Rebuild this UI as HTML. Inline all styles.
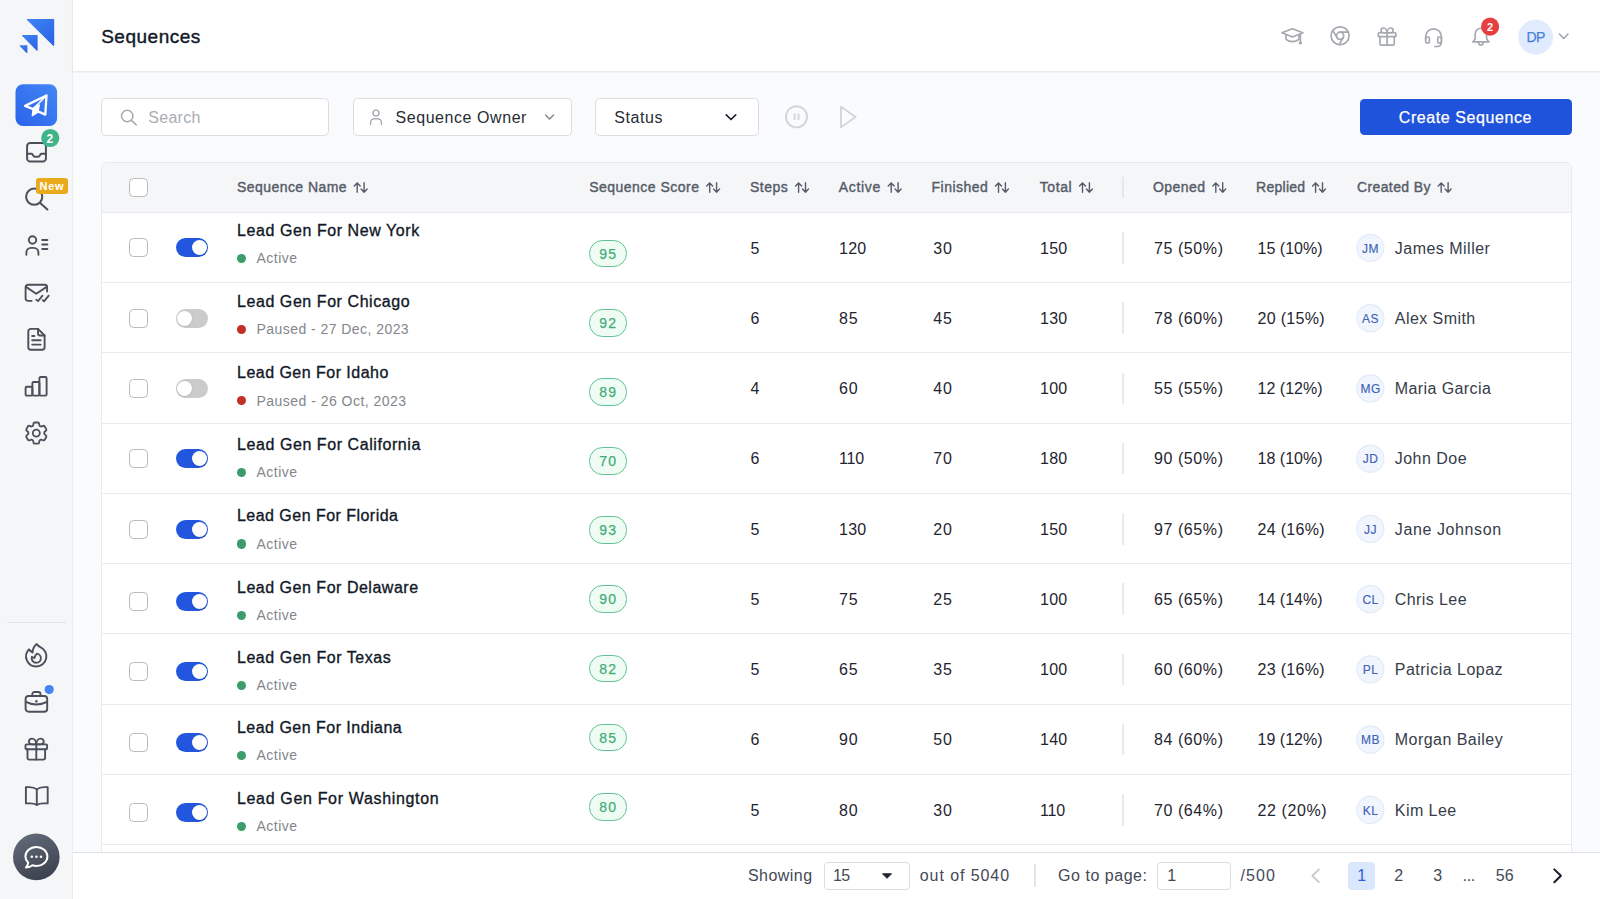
<!DOCTYPE html>
<html lang="en"><head><meta charset="utf-8"><title>Sequences</title>
<style>
*{box-sizing:border-box;margin:0;padding:0}
html,body{width:1600px;height:899px;overflow:hidden}
body{font-family:"Liberation Sans",sans-serif;background:#fafbfc;position:relative;color:#1f2937}
.t{position:absolute;height:20px;line-height:20px;white-space:pre;display:block}
.abs{position:absolute}
svg{position:absolute;overflow:visible}
#sidebar{position:absolute;left:0;top:0;width:73px;height:899px;background:#f5f6f8;border-right:1px solid #ebecef}
#header{position:absolute;left:73px;top:0;width:1527px;height:72px;background:#fff;border-bottom:1px solid #e9ebef;box-shadow:0 1px 3px rgba(16,24,40,.05)}
#main{position:absolute;left:73px;top:73px;width:1527px;height:780px;background:#fafbfc}
.box{position:absolute;background:#fff;border:1px solid #dbdde0;border-radius:4.500px}
#create{position:absolute;left:1360px;top:98.800px;width:211.500px;height:36.600px;background:#2053db;border-radius:4.500px}
#table{position:absolute;left:101px;top:162px;width:1471px;height:700px;background:#fff;border:1px solid #e8eaee;border-radius:6px 6px 0 0;overflow:hidden}
#thead{position:absolute;left:0;top:0;width:100%;height:50px;background:#f5f6f8;border-bottom:1px solid #e6e8ec}
.rowline{position:absolute;left:101px;width:1471px;height:1px;background:#eaebee}
.cb{position:absolute;width:19px;height:19px;border:1.3px solid #b9babd;border-radius:4.5px;background:#fff}
.tg{position:absolute;width:32.5px;height:19px;border-radius:10px}
.tg.on{background:#2356de}
.tg.off{background:#cbcbcc}
.tg i{position:absolute;top:2px;width:15px;height:15px;border-radius:50%;background:#fff;box-shadow:0 0.5px 1.5px rgba(0,0,0,.18)}
.tg.on i{left:15.800px}
.tg.off i{left:1.700px}
.dot{position:absolute;width:9.2px;height:9.2px;border-radius:50%}
.badge{position:absolute;width:37.600px;height:27.700px;border:1.2px solid #62c193;background:#effcf4;border-radius:13.500px}
.vdiv{position:absolute;width:1.600px;background:#e9eaed}
.av{position:absolute;width:27.6px;height:27.6px;border-radius:50%;background:#eff5fe;border:1px solid #dfe9fb}
#footer{position:absolute;left:73px;top:852px;width:1527px;height:47px;background:#fff;border-top:1px solid #dcdfe3}
</style></head>
<body>
<aside id="sidebar"><svg style="left:0px;top:0px" width="72" height="72" viewBox="0 0 72 72"><defs><linearGradient id="lg" x1="0" y1="0" x2="1" y2="1"><stop offset="0" stop-color="#3f83f4"/><stop offset="1" stop-color="#2a62e4"/></linearGradient></defs>
<g fill="url(#lg)" stroke="url(#lg)" stroke-width="1.2" stroke-linejoin="round"><path d="M27.4 19.6H53.6V45.2Z"/><path d="M22.6 35.7H37V50.2Z"/><path d="M20.3 45.9H26.8V52.4Z"/></g></svg><svg style="left:15px;top:84px" width="41.6" height="42.2" viewBox="0 0 41.6 42.2"><g transform="translate(0.500 0.200)"><defs><linearGradient id="ab" x1="1" y1="0" x2="0" y2="1"><stop offset="0" stop-color="#4387f5"/><stop offset="1" stop-color="#2a63ea"/></linearGradient></defs>
<rect x="0" y="0" width="41.6" height="41.8" rx="7.5" fill="url(#ab)"/>
<path d="M31 11.3L9.6 21.7L17.8 25L29.8 30.4Z" fill="none" stroke="#fff" stroke-width="2.3" stroke-linejoin="round"/>
<path d="M31 11.3L17.8 24.6" fill="none" stroke="#fff" stroke-width="1.6"/>
<path d="M17.6 23.6L16.6 31.9L22.6 28.2L24 20.5Z" fill="#fff" stroke="#fff" stroke-width="1" stroke-linejoin="round"/></g></svg><svg style="left:26px;top:142px" width="20.8" height="20.6" viewBox="0 0 21.2 20.6" preserveAspectRatio="none" fill="none" stroke="#4a4f5a" stroke-width="2" stroke-linecap="round" stroke-linejoin="round"><g transform="translate(0.102 0.000)"><rect x="1" y="1" width="19.2" height="18.6" rx="3.2"/><path d="M1 11.8h4.4c.6 0 1 .3 1.300.8l.5 1c.4.700 1.100 1.100 1.900 1.100h3c.8 0 1.500-.4 1.900-1.100l.5-1c.3-.5.700-.8 1.300-.8h4.400"/></g></svg><svg style="left:41px;top:128px" width="18.2" height="18.2" viewBox="0 0 18.2 18.2"><g transform="translate(0.200 0.900)"><circle cx="9.1" cy="9.1" r="9.1" fill="#3fb488"/></g></svg><span class="t" style="left:46.60px;top:129.25px;font-size:12px;color:#fff;letter-spacing:0.000px;font-weight:bold;">2</span><svg style="left:24px;top:186px" width="26" height="26" viewBox="0 0 26 26" fill="none" stroke="#4a4f5a" stroke-width="2" stroke-linecap="round"><g transform="translate(0.000 0.500)"><circle cx="10.2" cy="10.2" r="8.1"/><path d="M16.2 16.400L23.4 23"/></g></svg><div class="abs" style="left:35.6px;top:177.8px;width:32.6px;height:16px;border-radius:3px;background:#e9aa1b"></div><span class="t" style="left:39.40px;top:176.25px;font-size:11px;color:#fff;letter-spacing:0.792px;font-weight:bold;">New</span><svg style="left:24px;top:234px" width="26" height="24" viewBox="0 0 26 24" fill="none" stroke="#4a4f5a" stroke-width="1.9" stroke-linecap="round" stroke-linejoin="round"><circle cx="8.5" cy="6" r="3.7"/><path d="M2.4 20.800v-2.300c0-2.600 2.100-4.600 4.700-4.600h2.600c2.600 0 4.700 2 4.700 4.600v2.300"/><path d="M18.2 6h5.200M18.2 10.500h5.200M18.200 15h5.200"/></svg><svg style="left:24px;top:282px" width="27" height="22" viewBox="0 0 27 22" fill="none" stroke="#4a4f5a" stroke-width="1.900" stroke-linecap="round" stroke-linejoin="round"><path d="M7.600 18.900H4c-1.300 0-2.400-1.100-2.400-2.400V5.2c0-1.3 1.1-2.4 2.4-2.4h16.7c1.3 0 2.4 1.1 2.4 2.4v4.4"/><path d="M2 4.900l10.200 6.900 10.500-6.900"/><path d="M12.200 17.600l1.800 1.500 4.500-5.500M18.700 18.200l1.300 1.200 4.700-5.800" stroke-width="1.800"/></svg><svg style="left:26px;top:327px" width="20" height="24" viewBox="0 0 20 24" fill="none" stroke="#4a4f5a" stroke-width="1.9" stroke-linecap="round" stroke-linejoin="round"><g transform="translate(0.400 0.400)"><path d="M11.600 1.500H4.400c-1.400 0-2.500 1.100-2.500 2.500v15.800c0 1.400 1.100 2.500 2.500 2.500h11.300c1.400 0 2.500-1.100 2.500-2.500V8.100z"/><path d="M11.600 1.500v4.600c0 1.100.9 2 2 2h4.600"/><path d="M5.800 8.600h2.200M5.800 12.900h8.400M5.800 17.200h8.400"/></g></svg><svg style="left:24px;top:375px" width="26" height="22" viewBox="0 0 26 22" fill="none" stroke="#4a4f5a" stroke-width="1.9" stroke-linecap="round" stroke-linejoin="round"><g transform="translate(0.000 0.400)"><rect x="1.600" y="11.400" width="6.800" height="8.800" rx="1.200"/><rect x="8.400" y="6.600" width="7" height="13.600" rx="1.200"/><rect x="15.400" y="1.600" width="7.200" height="18.600" rx="1.200"/></g></svg><svg style="left:22px;top:419px" width="28.2" height="28.2" viewBox="0 0 24 24" fill="none" stroke="#4a4f5a" stroke-width="1.550" stroke-linecap="round" stroke-linejoin="round"><g transform="translate(0.170 0.000)"><path d="M9.594 3.940c.090-.542.560-.940 1.110-.940h2.593c.550 0 1.020.398 1.110.940l.213 1.281c.063.374.313.686.645.870.074.040.147.083.220.127.325.196.720.257 1.075.124l1.217-.456a1.125 1.125 0 0 1 1.370.490l1.296 2.247a1.125 1.125 0 0 1-.260 1.431l-1.003.827c-.293.241-.438.613-.430.992a7.723 7.723 0 0 1 0 .255c-.008.378.137.750.430.991l1.004.827c.424.350.534.955.260 1.430l-1.298 2.247a1.125 1.125 0 0 1-1.369.491l-1.217-.456c-.355-.133-.750-.072-1.076.124a6.470 6.470 0 0 1-.220.128c-.331.183-.581.495-.644.869l-.213 1.281c-.090.543-.560.940-1.110.940h-2.594c-.550 0-1.019-.398-1.110-.940l-.213-1.281c-.062-.374-.312-.686-.644-.870a6.520 6.520 0 0 1-.220-.127c-.325-.196-.720-.257-1.076-.124l-1.217.456a1.125 1.125 0 0 1-1.369-.490l-1.297-2.247a1.125 1.125 0 0 1 .260-1.431l1.004-.827c.292-.240.437-.613.430-.991a6.932 6.932 0 0 1 0-.255c.007-.380-.138-.751-.430-.992l-1.004-.827a1.125 1.125 0 0 1-.260-1.430l1.297-2.247a1.125 1.125 0 0 1 1.370-.491l1.216.456c.356.133.751.072 1.076-.124.072-.044.146-.086.220-.128.332-.183.582-.495.644-.869l.214-1.280z"/><path d="M15 12a3 3 0 1 1-6 0 3 3 0 0 1 6 0z"/></g></svg><div class="abs" style="left:7px;top:621.600px;width:59px;height:1.400px;background:#e1e3e7"></div><svg style="left:21px;top:640px" width="29.5" height="29.5" viewBox="0 0 24 24" fill="none" stroke="#4a4f5a" stroke-width="1.550" stroke-linecap="round" stroke-linejoin="round"><g transform="translate(0.407 0.569)"><path d="M15.362 5.214A8.252 8.252 0 0 1 12 21 8.250 8.250 0 0 1 6.038 7.047 8.287 8.287 0 0 0 9 9.601a8.983 8.983 0 0 1 3.361-6.867 8.210 8.210 0 0 0 3 2.480z"/><path d="M12 18a3.750 3.750 0 0 0 .495-7.468 5.990 5.990 0 0 0-1.925 3.547 5.975 5.975 0 0 1-2.133-1.001A3.750 3.750 0 0 0 12 18z"/></g></svg><svg style="left:24px;top:690px" width="25" height="23" viewBox="0 0 25 23" fill="none" stroke="#4a4f5a" stroke-width="1.900" stroke-linecap="round" stroke-linejoin="round"><g transform="translate(0.100 0.400)"><rect x="1.500" y="5.600" width="21.600" height="15.800" rx="3"/><path d="M8.200 5.400V3.800c0-1.200 1-2.200 2.200-2.200h3.800c1.200 0 2.200 1 2.200 2.200v1.600"/><path d="M1.700 11.500c3.200 1.700 6.800 2.600 10.600 2.600s7.400-.9 10.600-2.600"/><path d="M12.300 10.800v.2" stroke-width="2.400"/></g></svg><svg style="left:44px;top:685px" width="9.2" height="9.2" viewBox="0 0 9.2 9.2"><g transform="translate(0.600 0.000)"><circle cx="4.6" cy="4.6" r="4.6" fill="#4486f1"/></g></svg><svg style="left:24px;top:737px" width="24" height="24" viewBox="0 0 24 24" fill="none" stroke="#4a4f5a" stroke-width="1.90" stroke-linecap="round" stroke-linejoin="round"><g transform="translate(0.300 0.200)"><rect x="1.200" y="7.200" width="21.600" height="4.800" rx="1"/><path d="M3.200 12v8.600c0 1 .8 1.800 1.800 1.800h14c1 0 1.800-.8 1.800-1.800V12"/><path d="M12 7.200v15.200"/><path d="M12 7.200H7.600c-1.700 0-3-1.300-3-2.900s1.300-2.900 3-2.900c2.600 0 4.400 2.600 4.400 5.800z"/><path d="M12 7.200h4.400c1.700 0 3-1.300 3-2.900s-1.300-2.900-3-2.900c-2.600 0-4.400 2.600-4.400 5.800z"/></g></svg><svg style="left:24px;top:785px" width="25" height="22" viewBox="0 0 25 22" fill="none" stroke="#4a4f5a" stroke-width="1.900" stroke-linecap="round" stroke-linejoin="round"><g transform="translate(0.400 0.000)"><path d="M12.400 4.400C10.700 2.900 8 2.100 5 2.100H1.500v16.300h4.300c2.500 0 4.800.4 6.600 1.500 1.800-1.100 4.100-1.500 6.600-1.500h4.300V2.100H19.800c-3 0-5.700.8-7.400 2.300z"/><path d="M12.400 4.400v15.300"/></g></svg><svg style="left:12px;top:833px" width="47" height="47" viewBox="0 0 47 47"><g transform="translate(0.800 0.400)"><defs><linearGradient id="cg" x1="0.300" y1="0" x2="0.700" y2="1"><stop offset="0" stop-color="#626978"/><stop offset="1" stop-color="#3a404d"/></linearGradient></defs><circle cx="23.500" cy="23.500" r="23.300" fill="url(#cg)"/>
<path d="M23.600 13.600c-6.100 0-11 4.200-11 9.500 0 2.400 1.100 4.600 2.800 6.300-.2 1.700-1 3.300-2.300 4.600 2.500.1 4.800-.7 6.500-2.100 1.300.4 2.600.7 4 .7 6.100 0 11-4.200 11-9.500s-4.900-9.500-11-9.500z" fill="none" stroke="#fff" stroke-width="2" stroke-linejoin="round"/><circle cx="19" cy="23.400" r="1.300" fill="#fff"/><circle cx="23.600" cy="23.400" r="1.300" fill="#fff"/><circle cx="28.200" cy="23.400" r="1.300" fill="#fff"/></g></svg></aside>
<header><div id="header"></div><span class="t" style="left:101.20px;top:26.75px;font-size:19px;color:#111827;letter-spacing:0.502px;-webkit-text-stroke:0.4px #111827;">Sequences</span><svg style="left:1280px;top:27px" width="23.3" height="17.5" viewBox="0 0 24 18" fill="none" stroke="#a4a8af" stroke-width="1.700" stroke-linecap="round" stroke-linejoin="round"><g transform="translate(0.824 0.617)"><path d="M1.200 5.400L12 1.200l10.800 4.200L12 9.600z"/><path d="M5.400 7.400v4.600c1.800 1.600 4 2.400 6.600 2.400s4.800-.8 6.600-2.400V7.400"/><path d="M20.200 6.600v7.200M20.200 13.800l-1 2.600h2z"/></g></svg><svg style="left:1330px;top:26px" width="19.6" height="19.6" viewBox="0 0 24 24" fill="none" stroke="#a4a8af" stroke-width="2.050" stroke-linecap="round" stroke-linejoin="round"><g transform="translate(0.367 0.000)"><circle cx="12" cy="12" r="11"/><circle cx="12" cy="12" r="4.400"/><path d="M12 7.600h10M8.200 14.200L3.200 5.600M15.800 14.200l-5 8.600"/></g></svg><svg style="left:1377px;top:26px" width="19.6" height="19.6" viewBox="0 0 24 24" fill="none" stroke="#a4a8af" stroke-width="2.02" stroke-linecap="round" stroke-linejoin="round"><g transform="translate(0.367 1.102)"><rect x="1.200" y="7.200" width="21.600" height="4.800" rx="1"/><path d="M3.200 12v8.600c0 1 .8 1.800 1.800 1.800h14c1 0 1.800-.8 1.800-1.800V12"/><path d="M12 7.200v15.200"/><path d="M12 7.200H7.600c-1.700 0-3-1.300-3-2.900s1.300-2.900 3-2.900c2.600 0 4.400 2.600 4.400 5.800z"/><path d="M12 7.200h4.400c1.700 0 3-1.300 3-2.900s-1.300-2.900-3-2.900c-2.600 0-4.400 2.600-4.400 5.800z"/></g></svg><svg style="left:1423px;top:27px" width="19.5" height="21.3" viewBox="0 0 19 20" fill="none" stroke="#a4a8af" stroke-width="1.600" stroke-linecap="round" stroke-linejoin="round"><g transform="translate(0.779 0.000)"><path d="M1.800 11.600V9.200c0-4.300 3.400-7.800 7.700-7.800s7.700 3.500 7.700 7.800v2.400"/><path d="M1.800 11.400c0-1.100.9-2 2-2h.6c.6 0 1 .4 1 1v3.800c0 .6-.4 1-1 1h-.6c-1.100 0-2-.9-2-2zM17.200 11.400c0-1.100-.9-2-2-2h-.6c-.6 0-1 .4-1 1v3.800c0 .6.400 1 1 1h.6c1.100 0 2-.9 2-2z"/><path d="M17.200 13.400v1.400c0 2.200-1.800 3.800-4 3.800h-2.400"/></g></svg><svg style="left:1471px;top:27px" width="19" height="20" viewBox="0 0 19 20" fill="none" stroke="#a4a8af" stroke-width="1.650" stroke-linecap="round" stroke-linejoin="round"><g transform="translate(0.400 0.000)"><path d="M9.500 1.200c-3.200 0-5.700 2.600-5.700 5.800v3.400c0 1.400-.6 2.600-1.600 3.600l-.8.800h16.200l-.8-.8c-1-1-1.600-2.200-1.600-3.600V7c0-3.200-2.500-5.800-5.700-5.800z"/><path d="M7.200 15.400c0 1.300 1 2.600 2.300 2.600s2.300-1.300 2.300-2.600"/></g></svg><svg style="left:1481px;top:17px" width="18.2" height="18.2" viewBox="0 0 18.2 18.2"><g transform="translate(0.000 0.600)"><circle cx="9.1" cy="9.1" r="9.1" fill="#e5403f"/></g></svg><span class="t" style="left:1486.90px;top:17.25px;font-size:11px;color:#fff;letter-spacing:0.000px;font-weight:bold;">2</span><svg style="left:1518px;top:19px" width="34.8" height="34.8" viewBox="0 0 34.8 34.8"><g transform="translate(0.200 0.800)"><circle cx="17.4" cy="17.4" r="17.4" fill="#e0ebfd"/></g></svg><span class="t" style="left:1526.60px;top:27.25px;font-size:14px;color:#4a82d8;letter-spacing:-0.627px;-webkit-text-stroke:0.25px #4a82d8;">DP</span><svg style="left:1558px;top:32px" width="11" height="8" viewBox="0 0 11 8" fill="none" stroke="#9aa0a8" stroke-width="1.400" stroke-linecap="round" stroke-linejoin="round"><g transform="translate(0.200 0.600)"><path d="M1.200 1.400l4.300 4.400 4.300-4.400"/></g></svg></header>
<main><div id="main"></div>
<section class="toolbar"><div class="box" style="left:101px;top:98.300px;width:228px;height:37.400px"></div><svg style="left:120px;top:108px" width="18" height="18" viewBox="0 0 18 18" fill="none" stroke="#a7abb2" stroke-width="1.600" stroke-linecap="round"><g transform="translate(0.000 0.800)"><circle cx="7.200" cy="7.200" r="5.700"/><path d="M11.500 11.600l4.700 4.400"/></g></svg><span class="t" style="left:148.20px;top:107.75px;font-size:16px;color:#a9adb4;letter-spacing:0.316px;">Search</span><div class="box" style="left:353px;top:98.300px;width:218.500px;height:37.400px"></div><svg style="left:369px;top:108px" width="14" height="17" viewBox="0 0 14 17" fill="none" stroke="#a8abb1" stroke-width="1.4" stroke-linecap="round" stroke-linejoin="round"><g transform="translate(0.000 0.500)"><circle cx="7" cy="4.600" r="3"/><path d="M1.600 16v-2.200c0-2 1.600-3.600 3.600-3.600h3.600c2 0 3.600 1.600 3.600 3.600V16"/></g></svg><span class="t" style="left:395.50px;top:107.75px;font-size:16px;color:#292c34;letter-spacing:0.561px;">Sequence Owner</span><svg style="left:544px;top:113px" width="10.5" height="7" viewBox="0 0 12 8" fill="none" stroke="#7d828a" stroke-width="1.5" stroke-linecap="round" stroke-linejoin="round"><g transform="translate(0.343 0.914)"><path d="M1.400 1.400L6 6l4.600-4.600"/></g></svg><div class="box" style="left:595px;top:98.300px;width:164px;height:37.400px"></div><span class="t" style="left:614.20px;top:107.75px;font-size:16px;color:#292c34;letter-spacing:0.573px;">Status</span><svg style="left:725px;top:113px" width="12" height="8" viewBox="0 0 12 8" fill="none" stroke="#1f2430" stroke-width="1.7" stroke-linecap="round" stroke-linejoin="round"><g transform="translate(0.000 0.400)"><path d="M1.3 1.4L6 6.1l4.700-4.700"/></g></svg><svg style="left:784px;top:105px" width="24" height="24" viewBox="0 0 24 24" fill="none" stroke="#d3d5d9" stroke-width="1.9" stroke-linecap="round"><g transform="translate(0.500 0.000)"><circle cx="12" cy="11.800" r="10.600"/><path d="M10.100 9.500v4.800M14 9.500v4.800" stroke-width="2"/></g></svg><svg style="left:839px;top:105px" width="20" height="24" viewBox="0 0 20 24" fill="none" stroke="#d3d5d9" stroke-width="1.9" stroke-linejoin="round"><path d="M2 1.800v20.400L16.700 12z"/></svg><div id="create"></div><span class="t" style="left:1398.80px;top:107.75px;font-size:16px;color:#fff;letter-spacing:0.578px;-webkit-text-stroke:0.25px #fff;">Create Sequence</span></section>
<section class="list"><div id="table"><div id="thead"></div></div><span class="t" style="left:237.00px;top:177.25px;font-size:14px;color:#555c69;letter-spacing:0.439px;-webkit-text-stroke:0.4px #555c69;">Sequence Name</span><svg style="left:353px;top:180px" width="14" height="14" viewBox="0 0 14 14" fill="none" stroke="#555c69" stroke-width="1.4" stroke-linecap="round" stroke-linejoin="round"><g transform="translate(0.600 0.800)"><path d="M3.600 11.500V2.100M0.600 5.200L3.600 2.100L6.600 5.200M10.500 1.900v9.500M7.500 8.300l3 3.100 3-3.100"/></g></svg><span class="t" style="left:589.20px;top:177.25px;font-size:14px;color:#555c69;letter-spacing:0.483px;-webkit-text-stroke:0.4px #555c69;">Sequence Score</span><svg style="left:706px;top:180px" width="14" height="14" viewBox="0 0 14 14" fill="none" stroke="#555c69" stroke-width="1.4" stroke-linecap="round" stroke-linejoin="round"><g transform="translate(0.100 0.800)"><path d="M3.600 11.500V2.100M0.600 5.200L3.600 2.100L6.600 5.200M10.500 1.900v9.500M7.500 8.300l3 3.100 3-3.100"/></g></svg><span class="t" style="left:750.00px;top:177.25px;font-size:14px;color:#555c69;letter-spacing:0.517px;-webkit-text-stroke:0.4px #555c69;">Steps</span><svg style="left:795px;top:180px" width="14" height="14" viewBox="0 0 14 14" fill="none" stroke="#555c69" stroke-width="1.4" stroke-linecap="round" stroke-linejoin="round"><g transform="translate(0.000 0.800)"><path d="M3.600 11.500V2.100M0.600 5.200L3.600 2.100L6.600 5.200M10.500 1.900v9.500M7.500 8.300l3 3.100 3-3.100"/></g></svg><span class="t" style="left:838.80px;top:177.25px;font-size:14px;color:#555c69;letter-spacing:0.679px;-webkit-text-stroke:0.4px #555c69;">Active</span><svg style="left:887px;top:180px" width="14" height="14" viewBox="0 0 14 14" fill="none" stroke="#555c69" stroke-width="1.4" stroke-linecap="round" stroke-linejoin="round"><g transform="translate(0.600 0.800)"><path d="M3.600 11.500V2.100M0.600 5.200L3.600 2.100L6.600 5.200M10.500 1.900v9.500M7.500 8.300l3 3.100 3-3.100"/></g></svg><span class="t" style="left:931.50px;top:177.25px;font-size:14px;color:#555c69;letter-spacing:0.485px;-webkit-text-stroke:0.4px #555c69;">Finished</span><svg style="left:994px;top:180px" width="14" height="14" viewBox="0 0 14 14" fill="none" stroke="#555c69" stroke-width="1.4" stroke-linecap="round" stroke-linejoin="round"><g transform="translate(0.900 0.800)"><path d="M3.600 11.500V2.100M0.600 5.200L3.600 2.100L6.600 5.200M10.500 1.900v9.500M7.500 8.300l3 3.100 3-3.100"/></g></svg><span class="t" style="left:1039.70px;top:177.25px;font-size:14px;color:#555c69;letter-spacing:0.604px;-webkit-text-stroke:0.4px #555c69;">Total</span><svg style="left:1078px;top:180px" width="14" height="14" viewBox="0 0 14 14" fill="none" stroke="#555c69" stroke-width="1.4" stroke-linecap="round" stroke-linejoin="round"><g transform="translate(0.900 0.800)"><path d="M3.600 11.500V2.100M0.600 5.200L3.600 2.100L6.600 5.200M10.500 1.900v9.500M7.500 8.300l3 3.100 3-3.100"/></g></svg><span class="t" style="left:1152.90px;top:177.25px;font-size:14px;color:#555c69;letter-spacing:0.479px;-webkit-text-stroke:0.4px #555c69;">Opened</span><svg style="left:1212px;top:180px" width="14" height="14" viewBox="0 0 14 14" fill="none" stroke="#555c69" stroke-width="1.4" stroke-linecap="round" stroke-linejoin="round"><g transform="translate(0.200 0.800)"><path d="M3.600 11.500V2.100M0.600 5.200L3.600 2.100L6.600 5.200M10.500 1.900v9.500M7.500 8.300l3 3.100 3-3.100"/></g></svg><span class="t" style="left:1256.00px;top:177.25px;font-size:14px;color:#555c69;letter-spacing:0.274px;-webkit-text-stroke:0.4px #555c69;">Replied</span><svg style="left:1312px;top:180px" width="14" height="14" viewBox="0 0 14 14" fill="none" stroke="#555c69" stroke-width="1.4" stroke-linecap="round" stroke-linejoin="round"><g transform="translate(0.000 0.800)"><path d="M3.600 11.500V2.100M0.600 5.200L3.600 2.100L6.600 5.200M10.500 1.900v9.500M7.500 8.300l3 3.100 3-3.100"/></g></svg><span class="t" style="left:1356.90px;top:177.25px;font-size:14px;color:#555c69;letter-spacing:0.405px;-webkit-text-stroke:0.4px #555c69;">Created By</span><svg style="left:1437px;top:180px" width="14" height="14" viewBox="0 0 14 14" fill="none" stroke="#555c69" stroke-width="1.4" stroke-linecap="round" stroke-linejoin="round"><g transform="translate(0.600 0.800)"><path d="M3.600 11.500V2.100M0.600 5.200L3.600 2.100L6.600 5.200M10.500 1.900v9.500M7.500 8.300l3 3.100 3-3.100"/></g></svg><div class="cb" style="left:129px;top:178px"></div><div class="vdiv" style="left:1122.200px;top:176.800px;height:21.500px;background:#e6e7ea"></div><div class="row"><div class="rowline" style="top:282px"></div><div class="cb" style="left:129px;top:237.5px"></div><div class="tg on" style="left:175.800px;top:237.5px"><i></i></div><span class="t" style="left:237.00px;top:220.75px;font-size:16px;color:#111827;letter-spacing:0.573px;-webkit-text-stroke:0.34px #111827;">Lead Gen For New York</span><div class="dot" style="left:236.900px;top:253.8px;background:#3a9d6b"></div><span class="t" style="left:256.50px;top:248.25px;font-size:14px;color:#82868d;letter-spacing:0.479px;">Active</span><div class="badge" style="left:589px;top:239.7px"></div><span class="t" style="left:599.20px;top:244.25px;font-size:14px;color:#43ad7a;letter-spacing:1.311px;-webkit-text-stroke:0.25px #43ad7a;">95</span><span class="t" style="left:750.60px;top:238.75px;font-size:16px;color:#1f2530;letter-spacing:0.000px;">5</span><span class="t" style="left:839.00px;top:238.75px;font-size:16px;color:#1f2530;letter-spacing:0.232px;">120</span><span class="t" style="left:933.20px;top:238.75px;font-size:16px;color:#1f2530;letter-spacing:0.852px;">30</span><span class="t" style="left:1040.00px;top:238.75px;font-size:16px;color:#1f2530;letter-spacing:0.232px;">150</span><div class="vdiv" style="left:1122px;top:232.2px;height:31.400px"></div><span class="t" style="left:1153.90px;top:238.75px;font-size:16px;color:#1f2530;letter-spacing:0.597px;">75 (50%)</span><span class="t" style="left:1257.50px;top:238.75px;font-size:16px;color:#1f2530;letter-spacing:0.022px;">15 (10%)</span><svg style="left:1356px;top:233px" width="28.3" height="28.3" viewBox="0 0 28.3 28.3"><g transform="translate(0.200 0.800)"><circle cx="14.15" cy="14.15" r="13.6" fill="#f1f6fe" stroke="#e2eaf8" stroke-width="1.1"/></g></svg><span class="t" style="left:1370.60px;top:239.25px;font-size:12px;color:#4062b6;letter-spacing:0.500px;-webkit-text-stroke:0.15px #4062b6;transform:translateX(-50%);">JM</span><span class="t" style="left:1394.80px;top:238.75px;font-size:16px;color:#363c48;letter-spacing:0.484px;">James Miller</span></div>
<div class="row"><div class="rowline" style="top:352px"></div><div class="cb" style="left:129px;top:308.9px"></div><div class="tg off" style="left:175.800px;top:308.9px"><i></i></div><span class="t" style="left:237.00px;top:291.75px;font-size:16px;color:#111827;letter-spacing:0.566px;-webkit-text-stroke:0.34px #111827;">Lead Gen For Chicago</span><div class="dot" style="left:236.900px;top:325.0px;background:#c22f25"></div><span class="t" style="left:256.50px;top:319.25px;font-size:14px;color:#82868d;letter-spacing:0.447px;">Paused - 27 Dec, 2023</span><div class="badge" style="left:589px;top:308.9px"></div><span class="t" style="left:599.20px;top:313.25px;font-size:14px;color:#43ad7a;letter-spacing:1.311px;-webkit-text-stroke:0.25px #43ad7a;">92</span><span class="t" style="left:750.60px;top:308.75px;font-size:16px;color:#1f2530;letter-spacing:0.000px;">6</span><span class="t" style="left:839.00px;top:308.75px;font-size:16px;color:#1f2530;letter-spacing:0.852px;">85</span><span class="t" style="left:933.20px;top:308.75px;font-size:16px;color:#1f2530;letter-spacing:0.852px;">45</span><span class="t" style="left:1040.00px;top:308.75px;font-size:16px;color:#1f2530;letter-spacing:0.232px;">130</span><div class="vdiv" style="left:1122px;top:302.4px;height:31.400px"></div><span class="t" style="left:1153.90px;top:308.75px;font-size:16px;color:#1f2530;letter-spacing:0.597px;">78 (60%)</span><span class="t" style="left:1257.50px;top:308.75px;font-size:16px;color:#1f2530;letter-spacing:0.310px;">20 (15%)</span><svg style="left:1356px;top:304px" width="28.3" height="28.3" viewBox="0 0 28.3 28.3"><g transform="translate(0.200 0.050)"><circle cx="14.15" cy="14.15" r="13.6" fill="#f1f6fe" stroke="#e2eaf8" stroke-width="1.1"/></g></svg><span class="t" style="left:1370.60px;top:309.25px;font-size:12px;color:#4062b6;letter-spacing:0.500px;-webkit-text-stroke:0.15px #4062b6;transform:translateX(-50%);">AS</span><span class="t" style="left:1394.80px;top:308.75px;font-size:16px;color:#363c48;letter-spacing:0.433px;">Alex Smith</span></div>
<div class="row"><div class="rowline" style="top:423px"></div><div class="cb" style="left:129px;top:379.1px"></div><div class="tg off" style="left:175.800px;top:379.1px"><i></i></div><span class="t" style="left:237.00px;top:362.75px;font-size:16px;color:#111827;letter-spacing:0.477px;-webkit-text-stroke:0.34px #111827;">Lead Gen For Idaho</span><div class="dot" style="left:236.900px;top:396.3px;background:#c22f25"></div><span class="t" style="left:256.50px;top:391.25px;font-size:14px;color:#82868d;letter-spacing:0.476px;">Paused - 26 Oct, 2023</span><div class="badge" style="left:589px;top:378.0px"></div><span class="t" style="left:599.20px;top:382.25px;font-size:14px;color:#43ad7a;letter-spacing:1.311px;-webkit-text-stroke:0.25px #43ad7a;">89</span><span class="t" style="left:750.60px;top:378.75px;font-size:16px;color:#1f2530;letter-spacing:0.000px;">4</span><span class="t" style="left:839.00px;top:378.75px;font-size:16px;color:#1f2530;letter-spacing:0.852px;">60</span><span class="t" style="left:933.20px;top:378.75px;font-size:16px;color:#1f2530;letter-spacing:0.852px;">40</span><span class="t" style="left:1040.00px;top:378.75px;font-size:16px;color:#1f2530;letter-spacing:0.232px;">100</span><div class="vdiv" style="left:1122px;top:372.7px;height:31.400px"></div><span class="t" style="left:1153.90px;top:378.75px;font-size:16px;color:#1f2530;letter-spacing:0.597px;">55 (55%)</span><span class="t" style="left:1257.50px;top:378.75px;font-size:16px;color:#1f2530;letter-spacing:0.022px;">12 (12%)</span><svg style="left:1356px;top:374px" width="28.3" height="28.3" viewBox="0 0 28.3 28.3"><g transform="translate(0.200 0.300)"><circle cx="14.15" cy="14.15" r="13.6" fill="#f1f6fe" stroke="#e2eaf8" stroke-width="1.1"/></g></svg><span class="t" style="left:1370.60px;top:379.25px;font-size:12px;color:#4062b6;letter-spacing:0.500px;-webkit-text-stroke:0.15px #4062b6;transform:translateX(-50%);">MG</span><span class="t" style="left:1394.80px;top:378.75px;font-size:16px;color:#363c48;letter-spacing:0.402px;">Maria Garcia</span></div>
<div class="row"><div class="rowline" style="top:493px"></div><div class="cb" style="left:129px;top:449.4px"></div><div class="tg on" style="left:175.800px;top:449.4px"><i></i></div><span class="t" style="left:237.00px;top:434.75px;font-size:16px;color:#111827;letter-spacing:0.571px;-webkit-text-stroke:0.34px #111827;">Lead Gen For California</span><div class="dot" style="left:236.900px;top:467.5px;background:#3a9d6b"></div><span class="t" style="left:256.50px;top:462.25px;font-size:14px;color:#82868d;letter-spacing:0.479px;">Active</span><div class="badge" style="left:589px;top:447.2px"></div><span class="t" style="left:599.20px;top:451.25px;font-size:14px;color:#43ad7a;letter-spacing:1.311px;-webkit-text-stroke:0.25px #43ad7a;">70</span><span class="t" style="left:750.60px;top:448.75px;font-size:16px;color:#1f2530;letter-spacing:0.000px;">6</span><span class="t" style="left:839.00px;top:448.75px;font-size:16px;color:#1f2530;letter-spacing:-0.139px;">110</span><span class="t" style="left:933.20px;top:448.75px;font-size:16px;color:#1f2530;letter-spacing:0.852px;">70</span><span class="t" style="left:1040.00px;top:448.75px;font-size:16px;color:#1f2530;letter-spacing:0.232px;">180</span><div class="vdiv" style="left:1122px;top:442.9px;height:31.400px"></div><span class="t" style="left:1153.90px;top:448.75px;font-size:16px;color:#1f2530;letter-spacing:0.597px;">90 (50%)</span><span class="t" style="left:1257.50px;top:448.75px;font-size:16px;color:#1f2530;letter-spacing:0.022px;">18 (10%)</span><svg style="left:1356px;top:444px" width="28.3" height="28.3" viewBox="0 0 28.3 28.3"><g transform="translate(0.200 0.550)"><circle cx="14.15" cy="14.15" r="13.6" fill="#f1f6fe" stroke="#e2eaf8" stroke-width="1.1"/></g></svg><span class="t" style="left:1370.60px;top:449.25px;font-size:12px;color:#4062b6;letter-spacing:0.500px;-webkit-text-stroke:0.15px #4062b6;transform:translateX(-50%);">JD</span><span class="t" style="left:1394.80px;top:448.75px;font-size:16px;color:#363c48;letter-spacing:0.463px;">John Doe</span></div>
<div class="row"><div class="rowline" style="top:563px"></div><div class="cb" style="left:129px;top:519.6px"></div><div class="tg on" style="left:175.800px;top:519.6px"><i></i></div><span class="t" style="left:237.00px;top:505.75px;font-size:16px;color:#111827;letter-spacing:0.466px;-webkit-text-stroke:0.34px #111827;">Lead Gen For Florida</span><div class="dot" style="left:236.900px;top:539.4px;background:#3a9d6b"></div><span class="t" style="left:256.50px;top:534.25px;font-size:14px;color:#82868d;letter-spacing:0.479px;">Active</span><div class="badge" style="left:589px;top:516.3px"></div><span class="t" style="left:599.20px;top:520.25px;font-size:14px;color:#43ad7a;letter-spacing:1.311px;-webkit-text-stroke:0.25px #43ad7a;">93</span><span class="t" style="left:750.60px;top:519.75px;font-size:16px;color:#1f2530;letter-spacing:0.000px;">5</span><span class="t" style="left:839.00px;top:519.75px;font-size:16px;color:#1f2530;letter-spacing:0.232px;">130</span><span class="t" style="left:933.20px;top:519.75px;font-size:16px;color:#1f2530;letter-spacing:0.852px;">20</span><span class="t" style="left:1040.00px;top:519.75px;font-size:16px;color:#1f2530;letter-spacing:0.232px;">150</span><div class="vdiv" style="left:1122px;top:513.2px;height:31.400px"></div><span class="t" style="left:1153.90px;top:519.75px;font-size:16px;color:#1f2530;letter-spacing:0.597px;">97 (65%)</span><span class="t" style="left:1257.50px;top:519.75px;font-size:16px;color:#1f2530;letter-spacing:0.310px;">24 (16%)</span><svg style="left:1356px;top:514px" width="28.3" height="28.3" viewBox="0 0 28.3 28.3"><g transform="translate(0.200 0.800)"><circle cx="14.15" cy="14.15" r="13.6" fill="#f1f6fe" stroke="#e2eaf8" stroke-width="1.1"/></g></svg><span class="t" style="left:1370.60px;top:520.25px;font-size:12px;color:#4062b6;letter-spacing:0.500px;-webkit-text-stroke:0.15px #4062b6;transform:translateX(-50%);">JJ</span><span class="t" style="left:1394.80px;top:519.75px;font-size:16px;color:#363c48;letter-spacing:0.605px;">Jane Johnson</span></div>
<div class="row"><div class="rowline" style="top:633px"></div><div class="cb" style="left:129px;top:591.9px"></div><div class="tg on" style="left:175.800px;top:591.9px"><i></i></div><span class="t" style="left:237.00px;top:577.75px;font-size:16px;color:#111827;letter-spacing:0.516px;-webkit-text-stroke:0.34px #111827;">Lead Gen For Delaware</span><div class="dot" style="left:236.900px;top:610.6px;background:#3a9d6b"></div><span class="t" style="left:256.50px;top:605.25px;font-size:14px;color:#82868d;letter-spacing:0.479px;">Active</span><div class="badge" style="left:589px;top:585.4px"></div><span class="t" style="left:599.20px;top:589.25px;font-size:14px;color:#43ad7a;letter-spacing:1.311px;-webkit-text-stroke:0.25px #43ad7a;">90</span><span class="t" style="left:750.60px;top:589.75px;font-size:16px;color:#1f2530;letter-spacing:0.000px;">5</span><span class="t" style="left:839.00px;top:589.75px;font-size:16px;color:#1f2530;letter-spacing:0.852px;">75</span><span class="t" style="left:933.20px;top:589.75px;font-size:16px;color:#1f2530;letter-spacing:0.852px;">25</span><span class="t" style="left:1040.00px;top:589.75px;font-size:16px;color:#1f2530;letter-spacing:0.232px;">100</span><div class="vdiv" style="left:1122px;top:583.4px;height:31.400px"></div><span class="t" style="left:1153.90px;top:589.75px;font-size:16px;color:#1f2530;letter-spacing:0.597px;">65 (65%)</span><span class="t" style="left:1257.50px;top:589.75px;font-size:16px;color:#1f2530;letter-spacing:0.022px;">14 (14%)</span><svg style="left:1356px;top:585px" width="28.3" height="28.3" viewBox="0 0 28.3 28.3"><g transform="translate(0.200 0.050)"><circle cx="14.15" cy="14.15" r="13.6" fill="#f1f6fe" stroke="#e2eaf8" stroke-width="1.1"/></g></svg><span class="t" style="left:1370.60px;top:590.25px;font-size:12px;color:#4062b6;letter-spacing:0.500px;-webkit-text-stroke:0.15px #4062b6;transform:translateX(-50%);">CL</span><span class="t" style="left:1394.80px;top:589.75px;font-size:16px;color:#363c48;letter-spacing:0.413px;">Chris Lee</span></div>
<div class="row"><div class="rowline" style="top:704px"></div><div class="cb" style="left:129px;top:662.2px"></div><div class="tg on" style="left:175.800px;top:662.2px"><i></i></div><span class="t" style="left:237.00px;top:647.75px;font-size:16px;color:#111827;letter-spacing:0.534px;-webkit-text-stroke:0.34px #111827;">Lead Gen For Texas</span><div class="dot" style="left:236.900px;top:680.8px;background:#3a9d6b"></div><span class="t" style="left:256.50px;top:675.25px;font-size:14px;color:#82868d;letter-spacing:0.479px;">Active</span><div class="badge" style="left:589px;top:654.6px"></div><span class="t" style="left:599.20px;top:659.25px;font-size:14px;color:#43ad7a;letter-spacing:1.311px;-webkit-text-stroke:0.25px #43ad7a;">82</span><span class="t" style="left:750.60px;top:659.75px;font-size:16px;color:#1f2530;letter-spacing:0.000px;">5</span><span class="t" style="left:839.00px;top:659.75px;font-size:16px;color:#1f2530;letter-spacing:0.852px;">65</span><span class="t" style="left:933.20px;top:659.75px;font-size:16px;color:#1f2530;letter-spacing:0.852px;">35</span><span class="t" style="left:1040.00px;top:659.75px;font-size:16px;color:#1f2530;letter-spacing:0.232px;">100</span><div class="vdiv" style="left:1122px;top:653.7px;height:31.400px"></div><span class="t" style="left:1153.90px;top:659.75px;font-size:16px;color:#1f2530;letter-spacing:0.597px;">60 (60%)</span><span class="t" style="left:1257.50px;top:659.75px;font-size:16px;color:#1f2530;letter-spacing:0.310px;">23 (16%)</span><svg style="left:1356px;top:655px" width="28.3" height="28.3" viewBox="0 0 28.3 28.3"><g transform="translate(0.200 0.300)"><circle cx="14.15" cy="14.15" r="13.6" fill="#f1f6fe" stroke="#e2eaf8" stroke-width="1.1"/></g></svg><span class="t" style="left:1370.60px;top:660.25px;font-size:12px;color:#4062b6;letter-spacing:0.500px;-webkit-text-stroke:0.15px #4062b6;transform:translateX(-50%);">PL</span><span class="t" style="left:1394.80px;top:659.75px;font-size:16px;color:#363c48;letter-spacing:0.494px;">Patricia Lopaz</span></div>
<div class="row"><div class="rowline" style="top:774px"></div><div class="cb" style="left:129px;top:732.6px"></div><div class="tg on" style="left:175.800px;top:732.6px"><i></i></div><span class="t" style="left:237.00px;top:717.75px;font-size:16px;color:#111827;letter-spacing:0.476px;-webkit-text-stroke:0.34px #111827;">Lead Gen For Indiana</span><div class="dot" style="left:236.900px;top:750.9px;background:#3a9d6b"></div><span class="t" style="left:256.50px;top:745.25px;font-size:14px;color:#82868d;letter-spacing:0.479px;">Active</span><div class="badge" style="left:589px;top:723.8px"></div><span class="t" style="left:599.20px;top:728.25px;font-size:14px;color:#43ad7a;letter-spacing:1.311px;-webkit-text-stroke:0.25px #43ad7a;">85</span><span class="t" style="left:750.60px;top:729.75px;font-size:16px;color:#1f2530;letter-spacing:0.000px;">6</span><span class="t" style="left:839.00px;top:729.75px;font-size:16px;color:#1f2530;letter-spacing:0.852px;">90</span><span class="t" style="left:933.20px;top:729.75px;font-size:16px;color:#1f2530;letter-spacing:0.852px;">50</span><span class="t" style="left:1040.00px;top:729.75px;font-size:16px;color:#1f2530;letter-spacing:0.232px;">140</span><div class="vdiv" style="left:1122px;top:723.9px;height:31.400px"></div><span class="t" style="left:1153.90px;top:729.75px;font-size:16px;color:#1f2530;letter-spacing:0.597px;">84 (60%)</span><span class="t" style="left:1257.50px;top:729.75px;font-size:16px;color:#1f2530;letter-spacing:0.022px;">19 (12%)</span><svg style="left:1356px;top:725px" width="28.3" height="28.3" viewBox="0 0 28.3 28.3"><g transform="translate(0.200 0.550)"><circle cx="14.15" cy="14.15" r="13.6" fill="#f1f6fe" stroke="#e2eaf8" stroke-width="1.1"/></g></svg><span class="t" style="left:1370.60px;top:730.25px;font-size:12px;color:#4062b6;letter-spacing:0.500px;-webkit-text-stroke:0.15px #4062b6;transform:translateX(-50%);">MB</span><span class="t" style="left:1394.80px;top:729.75px;font-size:16px;color:#363c48;letter-spacing:0.463px;">Morgan Bailey</span></div>
<div class="row"><div class="rowline" style="top:844px"></div><div class="cb" style="left:129px;top:802.8px"></div><div class="tg on" style="left:175.800px;top:802.8px"><i></i></div><span class="t" style="left:237.00px;top:788.75px;font-size:16px;color:#111827;letter-spacing:0.662px;-webkit-text-stroke:0.34px #111827;">Lead Gen For Washington</span><div class="dot" style="left:236.900px;top:821.8px;background:#3a9d6b"></div><span class="t" style="left:256.50px;top:816.25px;font-size:14px;color:#82868d;letter-spacing:0.479px;">Active</span><div class="badge" style="left:589px;top:792.9px"></div><span class="t" style="left:599.20px;top:797.25px;font-size:14px;color:#43ad7a;letter-spacing:1.311px;-webkit-text-stroke:0.25px #43ad7a;">80</span><span class="t" style="left:750.60px;top:800.75px;font-size:16px;color:#1f2530;letter-spacing:0.000px;">5</span><span class="t" style="left:839.00px;top:800.75px;font-size:16px;color:#1f2530;letter-spacing:0.852px;">80</span><span class="t" style="left:933.20px;top:800.75px;font-size:16px;color:#1f2530;letter-spacing:0.852px;">30</span><span class="t" style="left:1040.00px;top:800.75px;font-size:16px;color:#1f2530;letter-spacing:-0.139px;">110</span><div class="vdiv" style="left:1122px;top:794.2px;height:31.400px"></div><span class="t" style="left:1153.90px;top:800.75px;font-size:16px;color:#1f2530;letter-spacing:0.597px;">70 (64%)</span><span class="t" style="left:1257.50px;top:800.75px;font-size:16px;color:#1f2530;letter-spacing:0.597px;">22 (20%)</span><svg style="left:1356px;top:795px" width="28.3" height="28.3" viewBox="0 0 28.3 28.3"><g transform="translate(0.200 0.800)"><circle cx="14.15" cy="14.15" r="13.6" fill="#f1f6fe" stroke="#e2eaf8" stroke-width="1.1"/></g></svg><span class="t" style="left:1370.60px;top:801.25px;font-size:12px;color:#4062b6;letter-spacing:0.500px;-webkit-text-stroke:0.15px #4062b6;transform:translateX(-50%);">KL</span><span class="t" style="left:1394.80px;top:800.75px;font-size:16px;color:#363c48;letter-spacing:0.442px;">Kim Lee</span></div>
</section></main>
<footer><div id="footer"></div><span class="t" style="left:747.90px;top:865.75px;font-size:16px;color:#434955;letter-spacing:0.461px;">Showing</span><div class="box" style="left:824px;top:861.800px;width:85.600px;height:27.800px;border-radius:4px"></div><span class="t" style="left:833.10px;top:865.75px;font-size:16px;color:#434955;letter-spacing:-0.648px;">15</span><svg style="left:881px;top:873px" width="11" height="6" viewBox="0 0 11 6"><g transform="translate(0.500 0.000)"><path d="M1 0.800h9L5.500 5.300z" fill="#1f2430" stroke="#1f2430" stroke-width="1" stroke-linejoin="round"/></g></svg><span class="t" style="left:919.80px;top:865.75px;font-size:16px;color:#434955;letter-spacing:0.920px;">out of 5040</span><div class="vdiv" style="left:1034px;top:864.200px;height:23px;background:#e1e3e7"></div><span class="t" style="left:1058.10px;top:865.75px;font-size:16px;color:#434955;letter-spacing:0.525px;">Go to page:</span><div class="box" style="left:1157.200px;top:861.600px;width:74px;height:28px;border-radius:4px"></div><span class="t" style="left:1167.30px;top:865.75px;font-size:16px;color:#434955;letter-spacing:0.000px;">1</span><span class="t" style="left:1240.60px;top:865.75px;font-size:16px;color:#434955;letter-spacing:1.065px;">/500</span><svg style="left:1310px;top:868px" width="10" height="16" viewBox="0 0 10 16" fill="none" stroke="#c3c6cc" stroke-width="1.700" stroke-linecap="round" stroke-linejoin="round"><g transform="translate(0.500 0.000)"><path d="M8.400 1.400L1.800 7.800l6.600 6.400"/></g></svg><div class="abs" style="left:1348.200px;top:861.600px;width:26.800px;height:28px;border-radius:4px;background:#dbe7fd"></div><span class="t" style="left:1361.60px;top:865.75px;font-size:16px;color:#2a63dc;letter-spacing:0.000px;transform:translateX(-50%);">1</span><span class="t" style="left:1398.80px;top:865.75px;font-size:16px;color:#434955;letter-spacing:0.000px;transform:translateX(-50%);">2</span><span class="t" style="left:1437.60px;top:865.75px;font-size:16px;color:#434955;letter-spacing:0.000px;transform:translateX(-50%);">3</span><span class="t" style="left:1462.60px;top:865.75px;font-size:16px;color:#434955;letter-spacing:-0.381px;">...</span><span class="t" style="left:1495.70px;top:865.75px;font-size:16px;color:#434955;letter-spacing:0.152px;">56</span><svg style="left:1552px;top:868px" width="10" height="16" viewBox="0 0 10 16" fill="none" stroke="#161b26" stroke-width="2" stroke-linecap="round" stroke-linejoin="round"><g transform="translate(0.500 0.000)"><path d="M1.800 1.400l6.600 6.400-6.600 6.400"/></g></svg></footer>
</body></html>
